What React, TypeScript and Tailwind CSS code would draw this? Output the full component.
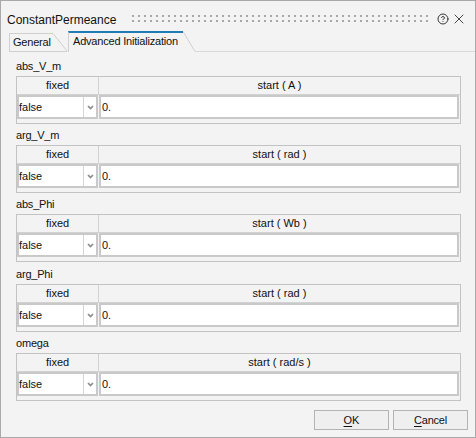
import { CircleHelp, X } from "lucide-react";

const groups = [
  { name: "abs_V_m", unit: "A", gap: "" },
  { name: "arg_V_m", unit: "rad", gap: "mt-[5px]" },
  { name: "abs_Phi", unit: "Wb", gap: "mt-[5px]" },
  { name: "arg_Phi", unit: "rad", gap: "mt-[6px]" },
  { name: "omega", unit: "rad/s", gap: "mt-[5px]" },
];

function Group({ name, unit, gap }: { name: string; unit: string; gap: string }) {
  return (
    <div className={`flex flex-col ${gap}`}>
      <div className="h-[13px] pl-0 text-[11px] leading-[13px] tracking-[-0.2px] text-[#111]">{name}</div>
      <div className="mt-[3px] flex h-[48px] w-[445px] flex-col border border-[#c3c3c3]">
        <div className="flex h-[18px] border-b border-[#d2d2d2]">
          <div className="w-[82px] border-r border-[#d2d2d2] text-center text-[11px] leading-[17px] text-[#111]">fixed</div>
          <div className="flex-1 text-center text-[11px] leading-[17px] text-[#111]">start ( {unit} )</div>
        </div>
        <div className="flex h-[24px] gap-[1px]">
          <div className="flex h-full w-[81px] border-2 border-[#c9c9c9] bg-white">
            <div className="flex-1 text-[11px] leading-[20px] text-[#111]">false</div>
            <div className="flex w-[13px] items-center justify-center border-l border-[#d6d6d6]">
              <svg width="7" height="5" viewBox="0 0 7 5">
                <path d="M1 1 L3.5 3.6 L6 1" fill="none" stroke="#8c8c8c" strokeWidth="1.7" />
              </svg>
            </div>
          </div>
          <div className="h-full w-[360px] border-2 border-[#c9c9c9] bg-white pl-[1px] text-[11px] leading-[20px] text-[#111]">0.</div>
        </div>
      </div>
    </div>
  );
}

export default function App() {
  const dots = Array.from({ length: 50 }, (_, i) => i * 6);
  return (
    <div className="flex h-[438px] w-[476px] flex-col overflow-hidden border border-[#a9a9a9] bg-[#f3f3f3] font-['Liberation_Sans',Arial,sans-serif] text-black">
      {/* title bar */}
      <div className="flex h-[30px] items-start pl-[6px]">
        <div className="mt-[12px] text-[12px] leading-[14px] text-[#111]">ConstantPermeance</div>
        <svg className="ml-[16px] mt-[14px]" width="296" height="7" viewBox="0 0 296 7">
          {dots.map((x) => (
            <g key={x}>
              <rect x={x} y={0} width="2" height="2" fill="#a8a8a8" />
              <rect x={x} y={5} width="2" height="2" fill="#a8a8a8" />
            </g>
          ))}
        </svg>
        <CircleHelp className="ml-[9px] mt-[12px]" size={12} strokeWidth={1.9} color="#2b2b2b" />
        <X className="ml-[2px] mt-[10px]" size={16} strokeWidth={1.3} color="#2b2b2b" />
      </div>

      {/* tabs */}
      <div className="flex h-[21px] items-end">
        <div className="w-[8px]" />
        <div className="flex h-[19px] border-b border-[#cfcfcf]">
          <div className="w-[44px] border-l border-t border-[#cfcfcf] pl-[3px] pt-[2px] text-[11px] leading-[13px] tracking-[-0.2px] text-[#111]">
            General
          </div>
          <svg width="14" height="18" viewBox="0 0 14 18">
            <path d="M0 0.5 L14 18" stroke="#cfcfcf" strokeWidth="1" fill="none" />
          </svg>
        </div>
        <div className="ml-[1px] flex h-[21px]">
          <div className="w-[115px] whitespace-nowrap border-l border-t-2 border-l-[#cfcfcf] border-t-[#1f7cb4] pl-[4px] pt-[2px] text-[11px] leading-[13px] tracking-[-0.2px] text-[#111]">
            Advanced Initialization
          </div>
          <svg width="12" height="21" viewBox="0 0 12 21">
            <path d="M0 0.5 L12 20.5" stroke="#cfcfcf" strokeWidth="1" fill="none" />
          </svg>
        </div>
        <div className="h-[1px] flex-1 bg-[#d9d9d9]" />
      </div>

      {/* content */}
      <div className="flex flex-col pl-[15px] pr-[14px] pt-[8px]">
        {groups.map((g) => (
          <Group key={g.name} {...g} />
        ))}
      </div>

      {/* buttons */}
      <div className="mt-[9px] flex justify-end gap-[4px] pr-[7px]">
        <button className="h-[20px] w-[75px] border border-[#b3b3b3] bg-[#efefef] text-[11px] leading-[18px] text-[#111]">
          <span className="underline underline-offset-2">O</span>K
        </button>
        <button className="h-[20px] w-[75px] border border-[#b3b3b3] bg-[#efefef] text-[11px] leading-[18px] tracking-[-0.2px] text-[#111]">
          <span className="underline underline-offset-2">C</span>ancel
        </button>
      </div>
    </div>
  );
}
